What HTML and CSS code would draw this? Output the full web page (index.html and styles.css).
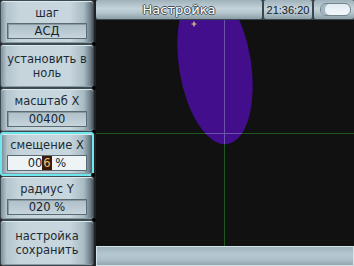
FILE: index.html
```html
<!DOCTYPE html>
<html lang="ru">
<head>
  <meta charset="UTF-8">
  <meta name="viewport" content="width=device-width, initial-scale=1.0">
  <title>Настройка</title>
  <link rel="stylesheet" href="styles.css">
</head>
<body>
  <div class="device">
    <div class="side">
      <div class="btn">
        <span class="label">шаг</span>
        <span class="field">АСД</span>
      </div>
      <div class="btn">
        <span class="label">установить в<br>ноль</span>
      </div>
      <div class="btn">
        <span class="label">масштаб X</span>
        <span class="field">00400</span>
      </div>
      <div class="btn active">
        <span class="label">смещение X</span>
        <span class="field edit">00<span class="cursor">6</span> %</span>
      </div>
      <div class="btn">
        <span class="label">радиус Y</span>
        <span class="field">020 %</span>
      </div>
      <div class="btn last">
        <span class="label">настройка<br>сохранить</span>
      </div>
    </div>

    <div class="main">
      <div class="topbar">
        <div class="seg title">Настройка</div>
        <div class="seg clock">21:36:20</div>
        <div class="seg status"><span class="pill"></span></div>
      </div>

      <div class="screen">
        <svg width="258" height="226" viewBox="0 0 258 226">
          <defs>
            <clipPath id="blob">
              <ellipse cx="119" cy="45" rx="36" ry="80" transform="rotate(-9 119 45)"/>
            </clipPath>
          </defs>
          <ellipse cx="119" cy="45" rx="36" ry="80" transform="rotate(-9 119 45)" fill="#420e8c"/>
          <line x1="128.5" y1="0" x2="128.5" y2="226" stroke="#1f581f" stroke-width="1"/>
          <line x1="0" y1="113.5" x2="258" y2="113.5" stroke="#1f581f" stroke-width="1"/>
          <g clip-path="url(#blob)">
            <line x1="128.5" y1="0" x2="128.5" y2="226" stroke="#6a54ac" stroke-width="1"/>
            <line x1="0" y1="113.5" x2="258" y2="113.5" stroke="#6a54ac" stroke-width="1"/>
          </g>
          <path d="M98 1.5v5M95.5 4h5" stroke="#dcd68c" stroke-width="1.2"/>
        </svg>
      </div>

      <div class="bottombar"><div class="track"></div></div>
    </div>
  </div>
</body>
</html>
```

FILE: styles.css
```css
body {
  margin: 0;
  background: #111;
  font-family: 'DejaVu Sans', Verdana, sans-serif;
}
.device {
  display: flex;
  width: 354px;
  height: 266px;
  background: #111;
  overflow: hidden;
}
.side {
  width: 96px;
  flex-shrink: 0;
  display: grid;
  grid-template-rows: 44px 44px 44px 44px 44px 46px;
  background: #222;
}
.btn {
  position: relative;
  box-sizing: border-box;
  margin-right: 2px;
  border: 1px solid #3c4a52;
  border-radius: 3px;
  background: linear-gradient(to right, #7e929c 0, #b3c4cc 6%, #c6d5dc 20%, #c8d6dd 75%, #a9bbc4 90%, #6e808a 97%, #4a5860 100%);
  box-shadow: inset 0 1px 0 #dde8ed, inset 0 -1px 0 #8799a2;
  display: flex;
  flex-direction: column;
  align-items: center;
  justify-content: center;
  gap: 3px;
  color: #1b2b36;
  font-size: 11.5px;
  line-height: 14px;
  text-align: center;
}
.btn::after {
  content: "";
  position: absolute;
  right: -3px;
  bottom: -3px;
  width: 4px;
  height: 4px;
  border-radius: 50%;
  background: #000;
}
.btn.last::after {
  display: none;
}
.btn.active {
  border: 2px solid #6fe6ee;
}
.label {
  display: block;
}
.field {
  box-sizing: border-box;
  width: 80px;
  height: 16px;
  line-height: 14px;
  border: 1px solid #5b6b73;
  background: linear-gradient(#aebfc7, #c6d4db);
  box-shadow: inset 1px 1px 0 #8a9ba3;
  color: #15242e;
}
.field.edit {
  background: #eef4f6;
  box-shadow: none;
}
.cursor {
  background: #3a1a06;
  color: #f0c080;
  padding: 0 1px;
}
.main {
  flex: 1;
  min-width: 0;
  display: flex;
  flex-direction: column;
}
.topbar {
  height: 20px;
  display: flex;
  gap: 2px;
  background: #3a474e;
}
.seg {
  box-sizing: border-box;
  height: 19px;
  flex-shrink: 0;
  background: linear-gradient(#9fb1ba, #c4d3da 45%, #b2c3cb 70%, #8b9da6);
  border-radius: 2px;
  display: flex;
  align-items: center;
  justify-content: center;
  overflow: hidden;
}
.title {
  flex: 1 1 auto;
  min-width: 0;
  color: #fff;
  font-size: 13px;
  text-shadow: 1px 0 0 #44545c, -1px 0 0 #44545c, 0 1px 0 #44545c, 0 -1px 0 #44545c;
}
.clock {
  width: 48px;
  color: #14222a;
  font-family: 'Liberation Sans', Arial, sans-serif;
  font-size: 11px;
}
.status {
  width: 40px;
  justify-content: flex-end;
  padding-right: 3px;
}
.pill {
  box-sizing: border-box;
  width: 31px;
  height: 13px;
  border-radius: 6px;
  border: 1px solid #72868f;
  background: linear-gradient(#e0ecf1, #f2f8fa);
  box-shadow: inset 4px 0 0 #a4b8c1;
}
.screen {
  flex: 1;
  background: #111;
  overflow: hidden;
}
.screen svg {
  display: block;
}
.bottombar {
  height: 20px;
  box-sizing: border-box;
  padding: 1px;
  background: #d6e4ea;
}
.track {
  height: 100%;
  background: linear-gradient(#9fb3bd, #b5c8d1 40%, #aec1ca 70%, #93a7b1);
}
```
